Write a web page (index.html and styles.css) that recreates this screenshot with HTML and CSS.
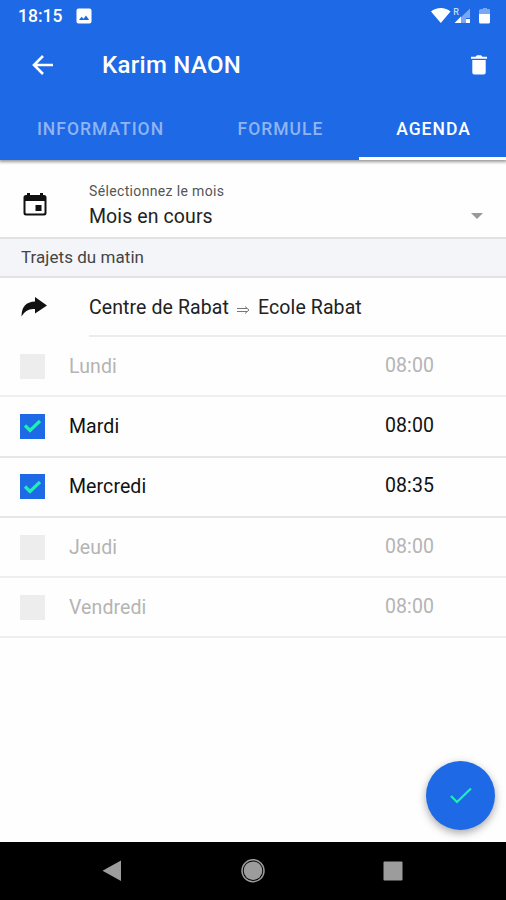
FILE: index.html
```html
<!DOCTYPE html>
<html lang="fr">
    <head>
        <meta charset="utf-8">
        <meta name="viewport" content="width=device-width, initial-scale=1.0">
        <title>Agenda</title>
        <link rel="stylesheet" href="styles.css">
    </head>
    <body>
        <header class="header">
            <div class="status-bar">
                <span class="clock">18:15</span>
                <svg class="photo-icon" width="16" height="16" viewBox="0 0 16 16">
                    <rect x=".5" y=".5" width="15" height="15" rx="2" fill="#fff"/>
                    <path d="M3 12l2.5-3.2 2 2L10 7.5l3.2 4.5z" fill="#1e69e5"/>
                </svg>
                <svg class="signal-icons" width="60" height="20" viewBox="0 0 60 20">
                    <path d="M0 5.500C5 .8 14.500.8 19.500 5.500L9.800 17z" fill="#fff"/>
                    <text class="roaming" x="22.3" y="9.3">R</text>
                    <path d="M39 2.500V12h-4v5H24z" fill="#7aa7f3"/>
                    <path d="M30 10.500V17h-6.500zM35 13h4v4h-4z" fill="#fff"/>
                    <path d="M50 3h2V2h4v1h2q1 0 1 1v4H48V4.500Q48 3 50 3z" fill="#7aa7f3"/>
                    <path d="M48 8h11v8q0 1.500-1.500 1.500h-8Q48 17.500 48 16z" fill="#fff"/>
                </svg>
            </div>
            <div class="toolbar">
                <svg class="back-icon" width="22" height="20" viewBox="0 0 22 20">
                    <path d="M11 1L2 10l9 9M2.500 10H21" fill="none" stroke="#fff" stroke-width="2.600"/>
                </svg>
                <h1 class="title">Karim NAON</h1>
                <svg class="trash-icon" width="18" height="20" viewBox="0 0 18 20">
                    <path d="M1 1.700h4.500L7 .3h4l1.500 1.400H17v2.100H1zM2.300 5h13.400v12.500q0 2-2 2H4.300q-2 0-2-2z" fill="#fff"/>
                </svg>
            </div>
            <nav class="tabs">
                <span class="tab tab-info">Information</span>
                <span class="tab tab-formule">Formule</span>
                <span class="tab tab-agenda active">Agenda</span>
            </nav>
        </header>
        <main class="content">
            <div class="month-row">
                <svg class="calendar-icon" width="24" height="24" viewBox="0 0 24 24">
                    <path d="M4 0h3v2h10V0h3v2h1q2.500 0 2.500 2.500v15.500Q23.500 22.500 21 22.500H3Q.5 22.500 .5 20v-15.500Q.5 2 3 2h1zM2.500 8v11.500q0 1 1 1h17q1 0 1-1V8z" fill="#111" fill-rule="evenodd"/>
                    <path d="M12.500 12h6v6h-6z" fill="#111"/>
                </svg>
                <div class="month-select">
                    <span class="month-label">Sélectionnez le mois</span>
                    <span class="month-value">Mois en cours</span>
                </div>
                <svg class="caret" width="12" height="6" viewBox="0 0 12 6">
                    <path d="M0 0h12L6 6z" fill="#999"/>
                </svg>
            </div>
            <h2 class="section-title">Trajets du matin</h2>
            <div class="route-row">
                <svg class="share-icon" width="26" height="20" viewBox="0 0 26 20">
                    <path d="M14 0L26 8.500 14 16.500V12Q5 11 .5 19.500 .5 5 14 4.500z" fill="#111"/>
                </svg>
                <div class="route">
                    <span class="route-from">Centre de Rabat</span>
                    <svg class="route-arrow" width="13" height="8" viewBox="0 0 13 8">
                        <path d="M0 2.500h10M0 5.500h10M8 .5L12 4 8 7.500" fill="none" stroke="#777"/>
                    </svg>
                    <span class="route-to">Ecole Rabat</span>
                </div>
            </div>
            <ul class="days">
                <li class="day off">
                    <span class="checkbox"></span>
                    <span class="day-name">Lundi</span>
                    <span class="day-time">08:00</span>
                </li>
                <li class="day">
                    <span class="checkbox">
                        <svg width="19" height="14" viewBox="0 0 19 14"><path d="M2 6.500l5 5L17 2" fill="none" stroke="#1cf0b4" stroke-width="3.200"/></svg>
                    </span>
                    <span class="day-name">Mardi</span>
                    <span class="day-time">08:00</span>
                </li>
                <li class="day">
                    <span class="checkbox">
                        <svg width="19" height="14" viewBox="0 0 19 14"><path d="M2 6.500l5 5L17 2" fill="none" stroke="#1cf0b4" stroke-width="3.200"/></svg>
                    </span>
                    <span class="day-name">Mercredi</span>
                    <span class="day-time">08:35</span>
                </li>
                <li class="day off">
                    <span class="checkbox"></span>
                    <span class="day-name">Jeudi</span>
                    <span class="day-time">08:00</span>
                </li>
                <li class="day off">
                    <span class="checkbox"></span>
                    <span class="day-name">Vendredi</span>
                    <span class="day-time">08:00</span>
                </li>
            </ul>
        </main>
        <button class="fab" aria-label="Valider">
            <svg width="24" height="18" viewBox="0 0 24 18"><path d="M2 9l6 6L22 1.500" fill="none" stroke="#1cf0b4" stroke-width="2.300"/></svg>
        </button>
        <footer class="nav-bar">
            <svg width="20" height="22" viewBox="0 0 20 22"><path d="M19 .5v20.500L.5 10.800z" fill="#9c9c9c"/></svg>
            <svg width="24" height="24" viewBox="0 0 24 24">
                <circle cx="12" cy="11.7" r="11" fill="none" stroke="#9c9c9c" stroke-width="1.500"/>
                <circle cx="12" cy="11.7" r="9.300" fill="#9c9c9c"/>
            </svg>
            <svg width="20" height="20" viewBox="0 0 20 20"><rect x=".5" y=".5" width="19" height="19" rx="1" fill="#9c9c9c"/></svg>
        </footer>
    </body>
</html>
```
FILE: styles.css
```css
* {
    box-sizing: border-box;
}
body {
    margin: 0;
    height: 900px;
    display: flex;
    flex-direction: column;
    position: relative;
    overflow: hidden;
    background-color: #fefefe;
    color: #222;
    font-family: Roboto, "Liberation Sans", sans-serif;
}
svg {
    display: block;
    flex: none;
}
.header {
    height: 160px;
    flex: none;
    color: #fff;
    background-color: #1e69e5;
    box-shadow: 0 1px 3px 1px rgba(0, 0, 0, 0.4);
}
.status-bar {
    display: flex;
    align-items: center;
    height: 32px;
    padding: 0 15px 0 18px;
}
.clock {
    width: 58px;
    font-size: 17.5px;
    font-weight: 500;
}
.signal-icons {
    margin-left: auto;
    margin-top: -1px;
}
.roaming {
    fill: #c9dcfa;
    font-size: 9px;
    font-weight: 500;
}
.toolbar {
    display: flex;
    align-items: center;
    height: 65px;
    padding: 0 18px 0 32px;
}
.title {
    margin: 0 auto 0 48px;
    font-size: 24px;
    font-weight: 500;
    letter-spacing: 0.3px;
    white-space: nowrap;
}
.tabs {
    display: flex;
    height: 63px;
}
.tab {
    flex: none;
    height: 63px;
    line-height: 64px;
    text-align: center;
    font-size: 17.5px;
    font-weight: 500;
    letter-spacing: 1px;
    text-transform: uppercase;
    color: #8fb4f2;
}
.tab-info {
    width: 201px;
}
.tab-formule {
    width: 158px;
    padding-left: 1px;
}
.tab-agenda {
    width: 147px;
    padding-left: 2px;
}
.tab.active {
    color: #fff;
    border-bottom: 3px solid #fff;
}
.content {
    flex: 1;
}
.month-row {
    display: flex;
    height: 79px;
    padding: 0 23px;
    border-bottom: 2px solid #e2e2e4;
}
.calendar-icon {
    margin-top: 33px;
}
.month-select {
    display: flex;
    flex-direction: column;
    margin-left: 42px;
    padding-top: 22px;
}
.month-label {
    font-size: 14px;
    line-height: 18px;
    letter-spacing: 0.35px;
    color: #555;
}
.month-value {
    font-size: 19.5px;
    line-height: 33px;
    letter-spacing: 0.1px;
}
.caret {
    margin: 53px 0 0 auto;
}
.section-title {
    height: 39px;
    margin: 0;
    padding-left: 21px;
    border-bottom: 2px solid #e2e2e4;
    background-color: #f4f5f9;
    font-size: 17px;
    font-weight: 400;
    line-height: 37px;
    letter-spacing: 0.05px;
    color: #444;
}
.route-row {
    display: flex;
    height: 59px;
    padding-left: 21px;
}
.share-icon {
    margin-top: 19px;
}
.route {
    display: flex;
    flex: 1;
    align-items: center;
    margin-left: 42px;
    padding-top: 1px;
    border-bottom: 2px solid #ececec;
    font-size: 19.5px;
    letter-spacing: 0.1px;
    white-space: nowrap;
}
.route-arrow {
    margin: 6px 8px 0 8px;
}
.days {
    margin: 0;
    padding: 0;
    list-style: none;
}
.day {
    display: flex;
    align-items: center;
    height: 60.3px;
    padding-left: 20px;
    border-bottom: 2px solid #e6e6e6;
    font-size: 19.5px;
    color: #111;
}
.day.off {
    border-color: #eee;
    color: #b4b4b4;
}
.checkbox {
    display: flex;
    align-items: center;
    justify-content: center;
    width: 25px;
    height: 25px;
    background-color: #1e69e5;
}
.off .checkbox {
    background-color: #ededed;
}
.day-name {
    width: 315px;
    padding-left: 24px;
    letter-spacing: 0.1px;
}
.day-time {
    margin: -2px 0 0 25px;
    letter-spacing: 0.1px;
}
.fab {
    position: absolute;
    right: 11px;
    bottom: 70px;
    display: flex;
    align-items: center;
    justify-content: center;
    width: 69px;
    height: 69px;
    padding: 0;
    border: 0;
    border-radius: 50%;
    background-color: #1e69e5;
    box-shadow: 0 3px 8px rgba(0, 0, 0, 0.35);
}
.nav-bar {
    display: flex;
    flex: none;
    align-items: center;
    justify-content: space-between;
    height: 58px;
    padding: 0 103px 0 102px;
    background-color: #000;
}
```
